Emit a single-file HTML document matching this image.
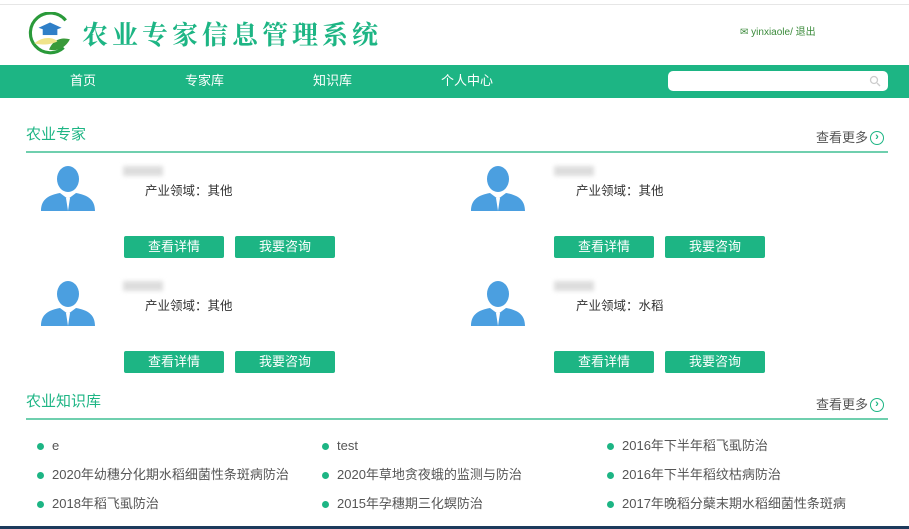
<!DOCTYPE html>
<html><head><meta charset="utf-8"><style>
*{margin:0;padding:0;box-sizing:border-box}
body{width:909px;height:529px;overflow:hidden;background:#fff;font-family:"Liberation Sans","Noto Sans CJK SC",sans-serif;position:relative;color:#555}
.a{position:absolute}
.nav{left:0;top:65px;width:909px;height:33px;background:#1db584}
.nav span{position:absolute;top:8px;color:#fff;font-size:13px;line-height:16px}
.title{font-size:15px;color:#1db584;line-height:18px}
.line{height:2px;background:#6fcfae;left:26px;width:862px}
.more{font-size:13px;color:#555;line-height:16px;display:flex;align-items:center}
.more i{display:inline-block;width:14px;height:14px;border:1.5px solid #1db584;border-radius:50%;margin-left:2px;font-style:normal;color:#1db584;font-size:11px;line-height:10px;text-align:center;font-weight:bold}
.btn{width:100px;height:22px;background:#1db584;color:#fff;font-size:13px;text-align:center;line-height:22px;border-radius:2px}
.field{font-size:12.5px;color:#333;line-height:16px}
.name{width:40px;height:10px;background:#ddd;filter:blur(2px)}
.li{font-size:13px;color:#555;line-height:16px;display:flex;align-items:center}
.li:before{content:"";display:inline-block;width:7px;height:7px;border-radius:50%;background:#1db584;margin-right:8px}
</style></head><body>
<div class="a" style="left:0;top:4px;width:909px;height:1px;background:#e6e6e6"></div>
<svg class="a" style="left:26px;top:12px" width="46" height="44" viewBox="0 0 44 42">
<path d="M38 8 A19 19 0 1 0 36 34" fill="none" stroke="#2a9a3a" stroke-width="3"/>
<path d="M12 15 L23 10 L34 15 L23 19 Z" fill="#2f7fc8"/><rect x="16" y="16" width="14" height="6" fill="#2f7fc8"/>
<path d="M22 36 C26 26 34 24 42 26 C38 34 30 38 22 36Z" fill="#3a9a3a"/>
<path d="M8 30 C16 23 26 24 30 28 C24 31 16 32 8 30Z" fill="#f0e48a"/>
</svg>
<div class="a" style="left:82px;top:17px;font-size:26px;line-height:34px;color:#1db584;letter-spacing:4px;font-family:'Noto Serif CJK SC',serif;font-weight:bold">农业专家信息管理系统</div>
<div class="a" style="left:740px;top:23px;font-size:10px;color:#3a8a3a">✉ yinxiaole/ 退出</div>
<div class="a nav">
<span style="left:70px">首页</span><span style="left:185px">专家库</span><span style="left:313px">知识库</span><span style="left:441px">个人中心</span>
<div class="a" style="left:668px;top:6px;width:220px;height:20px;background:#fff;border-radius:5px"></div>
<svg class="a" style="left:869px;top:10px" width="12" height="12"><circle cx="5" cy="5" r="3.5" fill="none" stroke="#ccc" stroke-width="1.3"/><line x1="8" y1="8" x2="11" y2="11" stroke="#ccc" stroke-width="1.3"/></svg>
</div>
<div class="a title" style="left:26px;top:126px">农业专家</div>
<div class="a line" style="top:151px"></div>
<div class="a more" style="left:816px;top:130px">查看更多<i>›</i></div>

<div class="a title" style="left:26px;top:393px">农业知识库</div>
<div class="a line" style="top:418px"></div>
<div class="a more" style="left:816px;top:397px">查看更多<i>›</i></div>

<svg width="0" height="0" style="position:absolute"><defs><g id="av"><ellipse cx="27" cy="14" rx="11" ry="13" fill="#4b9fe0"/><path d="M0 46 C0 34 8 30 19 28 L27 34 L35 28 C46 30 54 34 54 46Z" fill="#4b9fe0"/><path d="M25 33 L27 46 L29 33Z" fill="#fff"/></g></defs></svg>

<svg class="a" style="left:41px;top:165px" width="54" height="46"><use href="#av"/></svg>
<div class="a name" style="left:123px;top:166px"></div>
<div class="a field" style="left:145px;top:183px">产业领域：其他</div>
<div class="a btn" style="left:124px;top:236px">查看详情</div><div class="a btn" style="left:235px;top:236px">我要咨询</div>

<svg class="a" style="left:471px;top:165px" width="54" height="46"><use href="#av"/></svg>
<div class="a name" style="left:554px;top:166px"></div>
<div class="a field" style="left:576px;top:183px">产业领域：其他</div>
<div class="a btn" style="left:554px;top:236px">查看详情</div><div class="a btn" style="left:665px;top:236px">我要咨询</div>

<svg class="a" style="left:41px;top:280px" width="54" height="46"><use href="#av"/></svg>
<div class="a name" style="left:123px;top:281px"></div>
<div class="a field" style="left:145px;top:298px">产业领域：其他</div>
<div class="a btn" style="left:124px;top:351px">查看详情</div><div class="a btn" style="left:235px;top:351px">我要咨询</div>

<svg class="a" style="left:471px;top:280px" width="54" height="46"><use href="#av"/></svg>
<div class="a name" style="left:554px;top:281px"></div>
<div class="a field" style="left:576px;top:298px">产业领域：水稻</div>
<div class="a btn" style="left:554px;top:351px">查看详情</div><div class="a btn" style="left:665px;top:351px">我要咨询</div>

<div class="a li" style="left:37px;top:438px">e</div>
<div class="a li" style="left:37px;top:467px">2020年幼穗分化期水稻细菌性条斑病防治</div>
<div class="a li" style="left:37px;top:496px">2018年稻飞虱防治</div>
<div class="a li" style="left:322px;top:438px">test</div>
<div class="a li" style="left:322px;top:467px">2020年草地贪夜蛾的监测与防治</div>
<div class="a li" style="left:322px;top:496px">2015年孕穗期三化螟防治</div>
<div class="a li" style="left:607px;top:438px">2016年下半年稻飞虱防治</div>
<div class="a li" style="left:607px;top:467px">2016年下半年稻纹枯病防治</div>
<div class="a li" style="left:607px;top:496px">2017年晚稻分蘖末期水稻细菌性条斑病</div>
<div class="a" style="left:0;top:526px;width:909px;height:3px;background:#1d3a5c"></div>
</body></html>
